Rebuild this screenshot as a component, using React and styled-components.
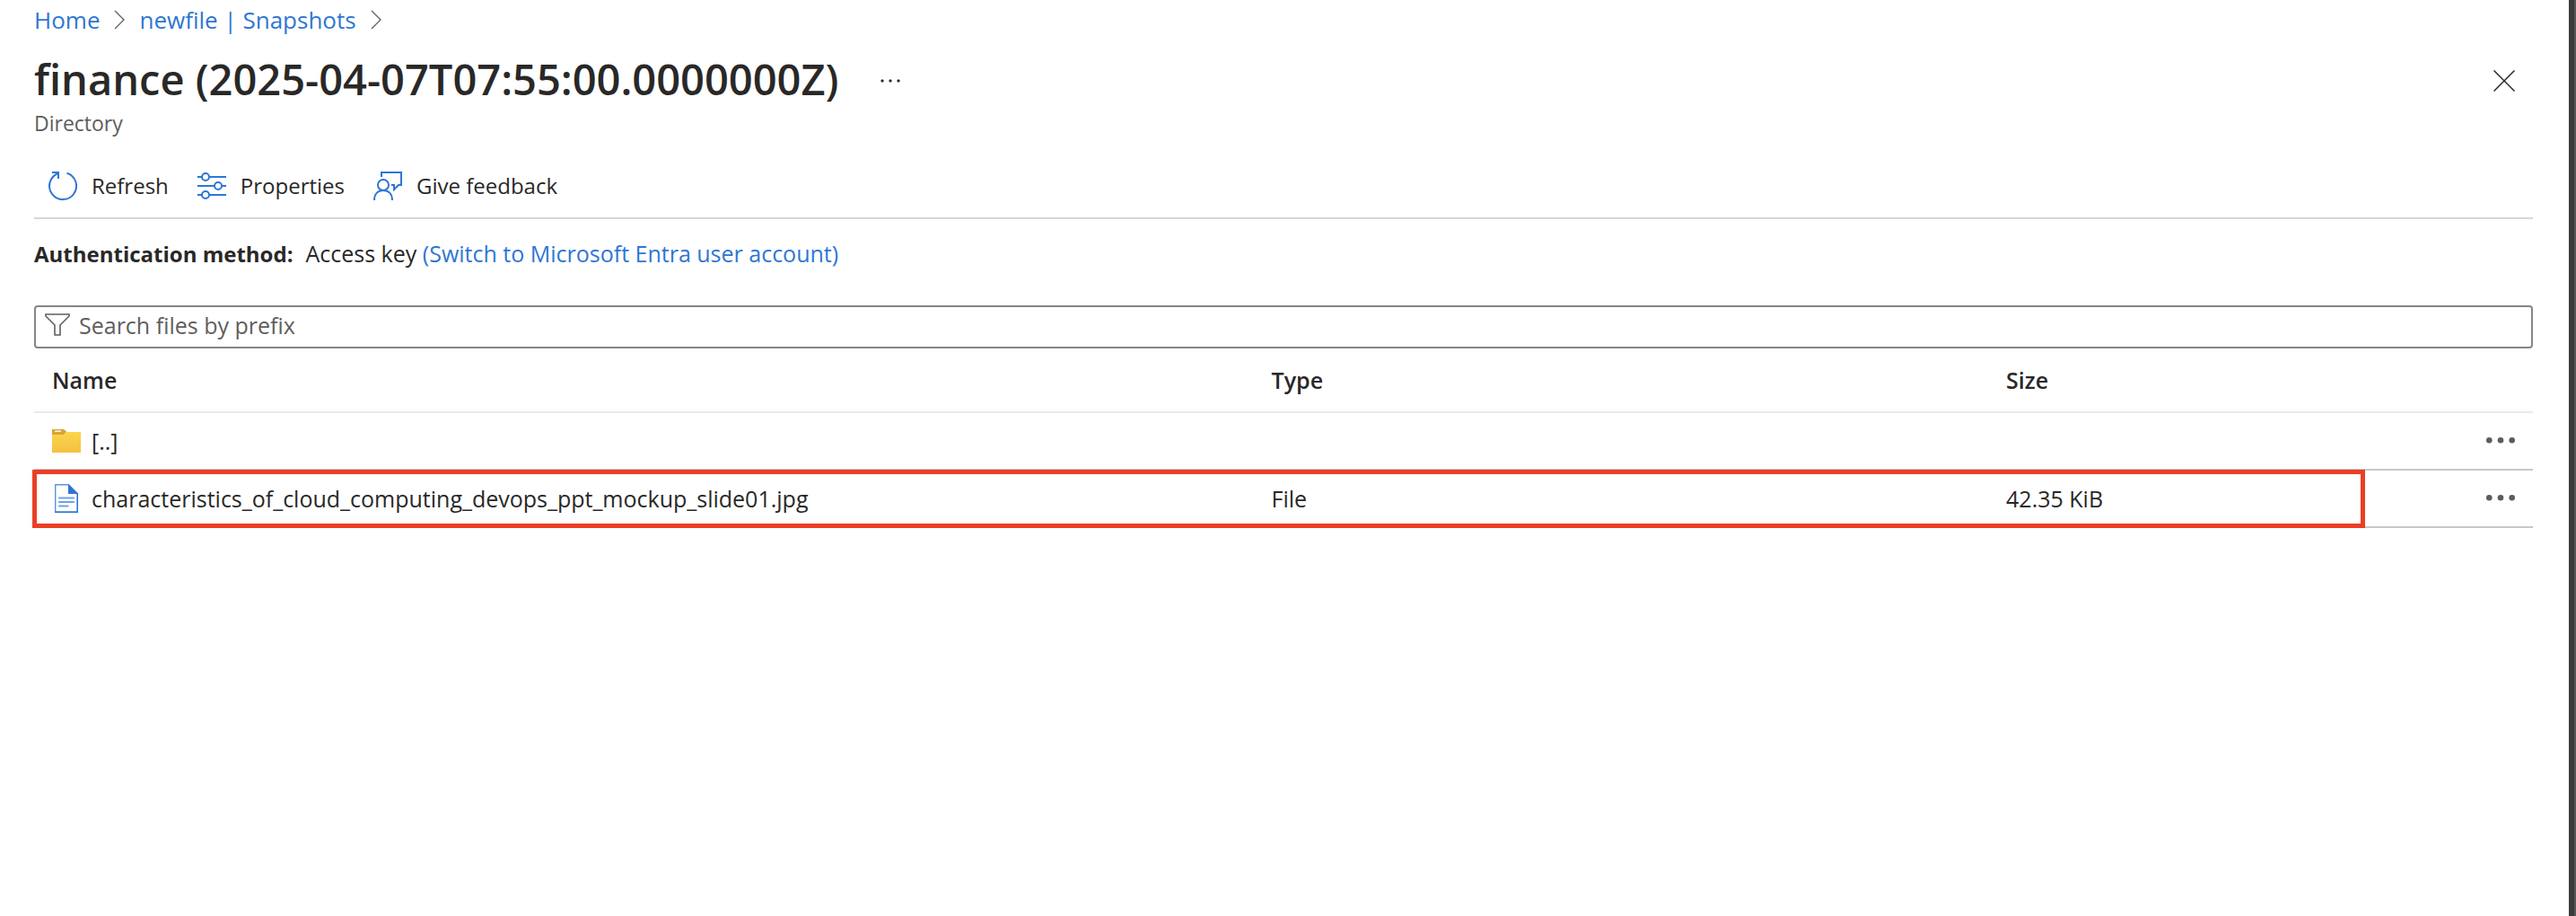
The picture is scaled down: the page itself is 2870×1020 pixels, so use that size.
import styled, { createGlobalStyle } from "styled-components";
import { useState } from "react";

const GlobalStyle = createGlobalStyle`
  :root {
    --link: #2f76d2;
    --text: #292827;
    --muted: #605e5c;
    --line: #c8c8c8;
    --highlight: #ea3f25;
  }
  * {
    box-sizing: border-box;
    margin: 0;
    padding: 0;
  }
  body {
    background-color: #fff;
    border-right: 2px solid #575757;
    color: var(--text);
    font-family: "Open Sans", "Noto Sans", sans-serif;
    font-size: 25px;
    line-height: 36px;
  }
  button, input {
    font: inherit;
    color: inherit;
    background: none;
    border: none;
  }
  a {
    color: var(--link);
    text-decoration: none;
  }
  svg {
    display: block;
    flex: none;
  }
`;
const Page = styled.div`
  min-height: 100vh;
  padding: 4px 40px 0 38px;
  border-right: 6px solid #3b3b3b;
`;
const Breadcrumb = styled.nav`
  display: flex;
  align-items: center;
  gap: 16px;
  margin-bottom: 16px;
  font-size: 26px;
`;
const Header = styled.header`
  display: flex;
  align-items: center;
  height: 64px;
  h1 {
    font-size: 47px;
    font-weight: 600;
    line-height: 64px;
  }
`;
const MoreButton = styled.button`
  margin-left: 42px;
  padding: 24px 4px 20px;
`;
const CloseButton = styled.button`
  margin-left: auto;
  padding: 24px 20px 20px;
`;
const Subtitle = styled.p`
  color: var(--muted);
  font-size: 23px;
  line-height: 34px;
`;
const Toolbar = styled.div`
  display: flex;
  align-items: center;
  gap: 32px;
  height: 72px;
  margin-top: 18px;
  padding-left: 16px;
  border-bottom: 2px solid #d6d6d6;
`;
const ToolButton = styled.button`
  display: flex;
  align-items: center;
  gap: 16px;
  font-size: 24px;
`;
const AuthLine = styled.p`
  margin: 20px 0 40px;
  strong {
    font-size: 24px;
    font-weight: 700;
    line-height: 1;
    margin-right: 14px;
  }
`;
const SearchBox = styled.label`
  display: flex;
  align-items: center;
  gap: 10px;
  height: 48px;
  padding: 0 10px 4px;
  border: 2px solid #868686;
  border-radius: 4px;
  input {
    flex: 1;
    outline: none;
  }
  input::placeholder {
    color: var(--muted);
    opacity: 1;
  }
`;
const FileTable = styled.table`
  width: 100%;
  table-layout: fixed;
  border-collapse: separate;
  border-spacing: 0;
  th, td {
    padding: 0 20px;
    text-align: left;
    vertical-align: middle;
  }
  th {
    height: 72px;
    font-weight: 600;
    border-bottom: 2px solid #eaeaea;
  }
  td {
    height: 64px;
    border-bottom: 2px solid var(--line);
  }
`;
const HeadCell = styled.th`
  width: ${(props) => props.$width};
`;
const Row = styled.tr`
  position: relative;
  &::after {
    content: "";
    display: ${(props) => (props.$marked ? "block" : "none")};
    position: absolute;
    inset: -1px 187px 0 -2px;
    border: 5px solid var(--highlight);
    pointer-events: none;
  }
`;
const FileName = styled.div`
  display: flex;
  align-items: center;
  gap: 12px;
`;
const RowMenu = styled.button`
  display: block;
  margin-left: auto;
`;

const Chevron = () => (
  <svg width="12" height="22" viewBox="0 0 12 22" fill="none" stroke="#605e5c" strokeWidth="1.3">
    <path d="M1 1l10 10L1 21" />
  </svg>
);
const RefreshIcon = () => (
  <svg width="32" height="34" viewBox="0 0 32 34" fill="none" stroke="#2f76d2" strokeWidth="2">
    <path d="M20.5 2.8A15 15 0 1 1 11 3" />
    <path d="M4 2h7v7" />
  </svg>
);
const PropertiesIcon = () => (
  <svg width="32" height="32" viewBox="0 0 32 32" fill="none" stroke="#2f76d2" strokeWidth="2">
    <path d="M0 6h5M13 6h19M0 16h19M27 16h5M0 26h5M13 26h19" />
    <circle cx="9" cy="6" r="4" />
    <circle cx="23" cy="16" r="4" />
    <circle cx="9" cy="26" r="4" />
  </svg>
);
const FeedbackIcon = () => (
  <svg width="32" height="34" viewBox="0 0 32 34" fill="none" stroke="#2f76d2" strokeWidth="2">
    <path d="M9 7V2h22v14h-3l-5 5v-5h-3" />
    <circle cx="11" cy="16" r="6" />
    <path d="M1 33c0-7 4-11 10-11s10 4 10 11" />
  </svg>
);
const FilterIcon = () => (
  <svg width="28" height="26" viewBox="0 0 28 26" fill="none" stroke="#605e5c" strokeWidth="1.6">
    <path d="M1 1h26v2L17 13v11h-6V13L1 3z" />
  </svg>
);
const FolderIcon = () => (
  <svg width="32" height="26" viewBox="0 0 32 26">
    <defs>
      <linearGradient id="folder" x1="0" y1="0" x2="0" y2="1">
        <stop offset="0" stopColor="#f9d74b" />
        <stop offset="1" stopColor="#f5bf42" />
      </linearGradient>
    </defs>
    <path d="M0 0h13l3 3h16v3H0z" fill="#f4e5ad" />
    <path d="M0 6h13l3-3h16v23H0z" fill="url(#folder)" />
    <path d="M0 0h13l3 2.5L13 6H0z" fill="#d9a336" />
    <path d="M3 1.4h7V3H3z" fill="#fbf3e0" />
  </svg>
);
const DocumentIcon = () => (
  <svg width="32" height="32" viewBox="0 0 32 32">
    <path d="M3.7.7h14.8l9.8 9.8v20.8H3.7z" fill="#fff" stroke="#5b93e2" strokeWidth="1.4" />
    <path d="M3 31.3h26M28.3 10v21" fill="none" stroke="#2f76d2" strokeWidth="1.4" />
    <path d="M18 0l11 11H18z" fill="#2f76d2" />
    <path d="M8 15.5h16M8 20h16M8 24.5h9.5" stroke="#6ea0ec" strokeWidth="2.2" strokeLinecap="round" />
  </svg>
);
const Dots = () => (
  <svg width="32" height="8" viewBox="0 0 32 8" fill="#5c5c5c">
    <circle cx="3.3" cy="3.3" r="3.3" />
    <circle cx="16" cy="3.3" r="3.3" />
    <circle cx="28.7" cy="3.3" r="3.3" />
  </svg>
);

const tools = [
  { label: "Refresh", Icon: RefreshIcon },
  { label: "Properties", Icon: PropertiesIcon },
  { label: "Give feedback", Icon: FeedbackIcon },
];
const files = [
  { name: "[..]", type: "", size: "", Icon: FolderIcon },
  {
    name: "characteristics_of_cloud_computing_devops_ppt_mockup_slide01.jpg",
    type: "File",
    size: "42.35 KiB",
    Icon: DocumentIcon,
    marked: true,
  },
];

const App = () => {
  const [prefix, setPrefix] = useState("");

  return (
    <Page>
      <GlobalStyle />
      <Breadcrumb>
        <a href="#home">Home</a>
        <Chevron />
        <a href="#snapshots">newfile | Snapshots</a>
        <Chevron />
      </Breadcrumb>
      <Header>
        <h1>finance (2025-04-07T07:55:00.0000000Z)</h1>
        <MoreButton aria-label="More">
          <svg width="24" height="6" viewBox="0 0 24 6" fill="#292827">
            <path d="M3 1l2 2-2 2-2-2zM12 1l2 2-2 2-2-2zM21 1l2 2-2 2-2-2z" />
          </svg>
        </MoreButton>
        <CloseButton aria-label="Close">
          <svg width="24" height="24" viewBox="0 0 24 24" stroke="#292827" strokeWidth="1.5">
            <path d="M.5.5l23 23M23.5.5l-23 23" />
          </svg>
        </CloseButton>
      </Header>
      <Subtitle>Directory</Subtitle>
      <Toolbar>
        {tools.map(({ label, Icon }) => (
          <ToolButton key={label}>
            <Icon />
            {label}
          </ToolButton>
        ))}
      </Toolbar>
      <AuthLine>
        <strong>Authentication method:</strong>
        Access key <a href="#switch">(Switch to Microsoft Entra user account)</a>
      </AuthLine>
      <SearchBox>
        <FilterIcon />
        <input
          type="text"
          aria-label="Search files by prefix"
          placeholder="Search files by prefix"
          value={prefix}
          onChange={(e) => setPrefix(e.target.value)}
        />
      </SearchBox>
      <FileTable>
        <thead>
          <tr>
            <HeadCell $width="48.8%">Name</HeadCell>
            <HeadCell $width="29.4%">Type</HeadCell>
            <HeadCell $width="15%">Size</HeadCell>
            <HeadCell $width="6.8%" aria-label="Actions" />
          </tr>
        </thead>
        <tbody>
          {files.map(({ name, type, size, Icon, marked }) => (
            <Row key={name} $marked={marked}>
              <td>
                <FileName>
                  <Icon />
                  {name}
                </FileName>
              </td>
              <td>{type}</td>
              <td>{size}</td>
              <td>
                <RowMenu aria-label={`Actions for ${name}`}>
                  <Dots />
                </RowMenu>
              </td>
            </Row>
          ))}
        </tbody>
      </FileTable>
    </Page>
  );
};
export default App;
